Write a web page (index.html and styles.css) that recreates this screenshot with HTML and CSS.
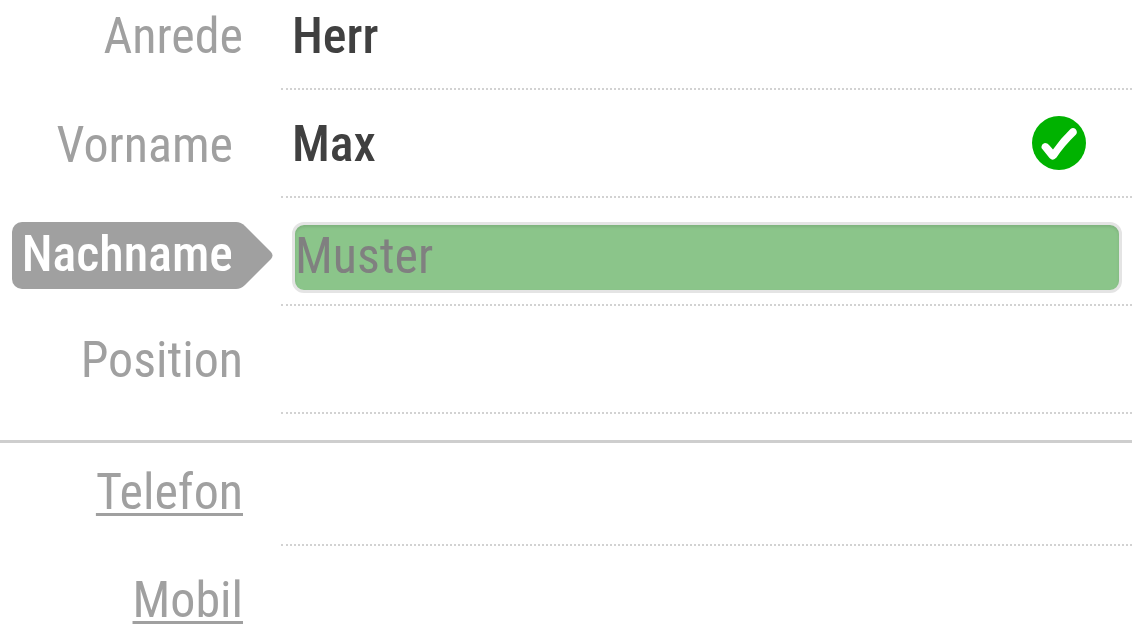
FILE: index.html
```html
<!DOCTYPE html>
<html lang="de">
<head>
    <meta charset="UTF-8">
    <meta name="viewport" content="width=device-width, initial-scale=1.0">
    <title>Kontakt</title>
    <link rel="stylesheet" href="styles.css">
</head>
<body>
    <form class="contact-form">
        <!-- Person -->
        <div class="group">
            <div class="row row-first">
                <div class="caption"><label for="anrede">Anrede</label></div>
                <div class="field"><input type="text" id="anrede" value="Herr"></div>
            </div>
            <div class="row">
                <div class="caption"><label class="tag" for="vorname">Vorname</label></div>
                <div class="field">
                    <input type="text" id="vorname" value="Max">
                    <svg class="check" viewBox="0 0 54 54" aria-hidden="true">
                        <circle cx="27" cy="27" r="27" fill="#00b200"/>
                        <path d="M9.500 32 Q9 28 13 27 Q15.500 27 17 29 L21 33.500 Q29 22 38.500 13 Q41 11 43.500 13 Q46 16 44 18.500 Q32 30 24.500 41.500 Q21 45.500 17.500 42 Z" fill="#fff"/>
                    </svg>
                </div>
            </div>
            <div class="row">
                <div class="caption">
                    <label class="tag tag-active" for="nachname">Nachname
                        <svg class="tag-point" viewBox="0 0 42 67" aria-hidden="true">
                            <path d="M0 0 H5 Q10 0 14 4 L40 30 Q43 33.500 40 37 L14 63 Q10 67 5 67 H0 Z" fill="#a0a0a0"/>
                        </svg>
                    </label>
                </div>
                <div class="field"><input class="active" type="text" id="nachname" placeholder="Muster"></div>
            </div>
            <div class="row">
                <div class="caption"><label for="position">Position</label></div>
                <div class="field"><input type="text" id="position"></div>
            </div>
        </div>

        <!-- Telefonnummern -->
        <div class="group">
            <div class="row row-first">
                <div class="caption"><a href="#telefon" id="telefon-label">Telefon</a></div>
                <div class="field"><input type="tel" id="telefon" aria-labelledby="telefon-label"></div>
            </div>
            <div class="row">
                <div class="caption"><a href="#mobil" id="mobil-label">Mobil</a></div>
                <div class="field"><input type="tel" id="mobil" aria-labelledby="mobil-label"></div>
            </div>
        </div>
    </form>
</body>
</html>
```

FILE: styles.css
```css
* {
    box-sizing: border-box;
}
body {
    margin: 0;
    overflow: hidden;
    background-color: #fff;
    font-family: 'Roboto Condensed', 'Roboto', sans-serif;
    font-size: 50px;
    line-height: 68px;
    color: #a0a0a0;
}
.group + .group {
    margin-top: 26px;
    padding-top: 13px;
    border-top: 3px solid #cecece;
}
.row {
    display: grid;
    grid-template-columns: 281px 1fr;
    height: 108px;
    padding-top: 20px;
}
.row-first {
    height: 90px;
    padding-top: 2px;
}
.caption {
    padding-right: 38px;
    text-align: right;
}
.caption label,
.caption a {
    display: inline-block;
    color: #a0a0a0;
}
.caption a {
    text-decoration-thickness: 3px;
    text-underline-offset: 4px;
}
.caption .tag {
    position: relative;
    height: 67px;
    padding: 0 10px;
    border-radius: 10px;
    line-height: 70px;
}
.caption .tag-active {
    margin-top: 4px;
    line-height: 64px;
    font-weight: 500;
    background-color: #a0a0a0;
    color: #fff;
}
.tag-point {
    position: absolute;
    top: 0;
    left: calc(100% - 12px);
    width: 42px;
    height: 67px;
}
.field {
    display: flex;
    align-items: flex-start;
    padding: 0 10px 0 11px;
    border-bottom: 2px dotted #d2d2d2;
}
.field input {
    flex: 1;
    min-width: 0;
    height: 68px;
    padding: 0;
    border: none;
    outline: none;
    background: none;
    font: inherit;
    font-weight: 500;
    color: #404040;
}
.field .active {
    height: 71px;
    margin-top: 4px;
    padding-bottom: 4px;
    border: 3px solid #e4e4e4;
    border-radius: 12px;
    background-color: #8bc58a;
    box-shadow: inset 0 2px 3px rgba(0, 0, 0, 0.1);
    font-weight: 400;
}
.field .active::placeholder {
    color: #808080;
    opacity: 1;
}
.check {
    width: 54px;
    height: 54px;
    margin: 6px 36px 0 0;
}
```
